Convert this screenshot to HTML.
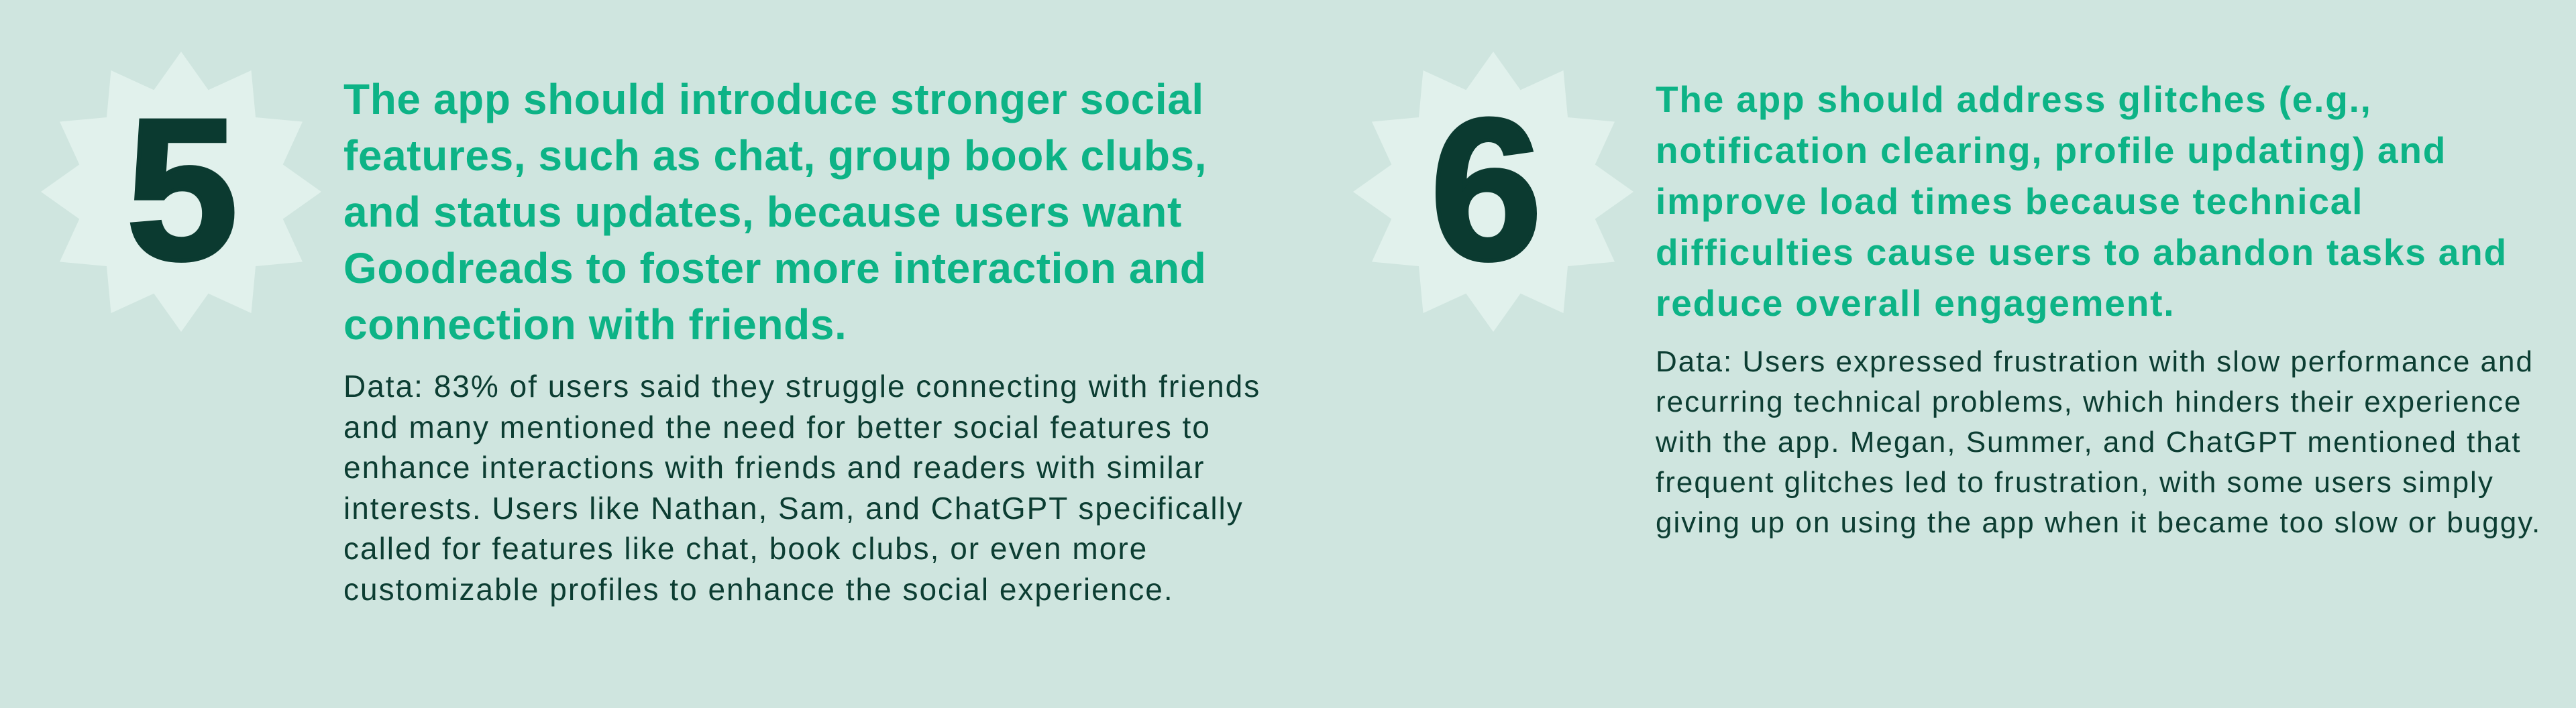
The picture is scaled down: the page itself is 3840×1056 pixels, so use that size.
<!DOCTYPE html>
<html><head><meta charset="utf-8"><style>
html,body{margin:0;padding:0;}
body{width:3840px;height:1056px;background:#cfe5df;position:relative;overflow:hidden;font-family:"Liberation Sans",sans-serif;}
.t{position:absolute;color:#0db386;font-weight:bold;white-space:nowrap;}
.b{position:absolute;color:#0c3d32;white-space:nowrap;}
.n{position:absolute;color:#0b3a30;font-weight:bold;font-size:300px;line-height:1;-webkit-text-stroke:6px #0b3a30;}
svg{position:absolute;left:0;top:0;}
</style></head><body>
<svg width="3840" height="1056">
<polygon id="s1" fill="#e1f1ec" points=""/>
<polygon id="s2" fill="#e1f1ec" points=""/>
</svg>
<script>
function star(id,cx,cy,R,r){var p=[];for(var i=0;i<24;i++){var a=i*Math.PI/12;var rr=i%2?r:R;p.push((cx+rr*Math.sin(a)).toFixed(1)+","+(cy-rr*Math.cos(a)).toFixed(1));}document.getElementById(id).setAttribute("points",p.join(" "));}
star("s1",270,286,209,157);star("s2",2226,286,209,157);
</script>
<div class="n" style="left:188px;top:132px;">5</div>
<div class="n" style="left:2132px;top:132px;">6</div>
<div class="t" style="left:512px;top:106px;font-size:64px;line-height:84px;letter-spacing:0.6px;">The app should introduce stronger social<br>features, such as chat, group book clubs,<br>and status updates, because users want<br>Goodreads to foster more interaction and<br>connection with friends.</div>
<div class="b" style="left:512px;top:546px;font-size:46px;line-height:60.5px;letter-spacing:2px;">Data: 83% of users said they struggle connecting with friends<br>and many mentioned the need for better social features to<br>enhance interactions with friends and readers with similar<br>interests. Users like Nathan, Sam, and ChatGPT specifically<br>called for features like chat, book clubs, or even more<br>customizable profiles to enhance the social experience.</div>
<div class="t" style="left:2468px;top:110px;font-size:55px;line-height:76px;letter-spacing:1.8px;">The app should address glitches (e.g.,<br>notification clearing, profile updating) and<br>improve load times because technical<br>difficulties cause users to abandon tasks and<br>reduce overall engagement.</div>
<div class="b" style="left:2468px;top:510px;font-size:44px;line-height:60px;letter-spacing:2px;">Data: Users expressed frustration with slow performance and<br>recurring technical problems, which hinders their experience<br>with the app. Megan, Summer, and ChatGPT mentioned that<br>frequent glitches led to frustration, with some users simply<br>giving up on using the app when it became too slow or buggy.</div>
</body></html>
